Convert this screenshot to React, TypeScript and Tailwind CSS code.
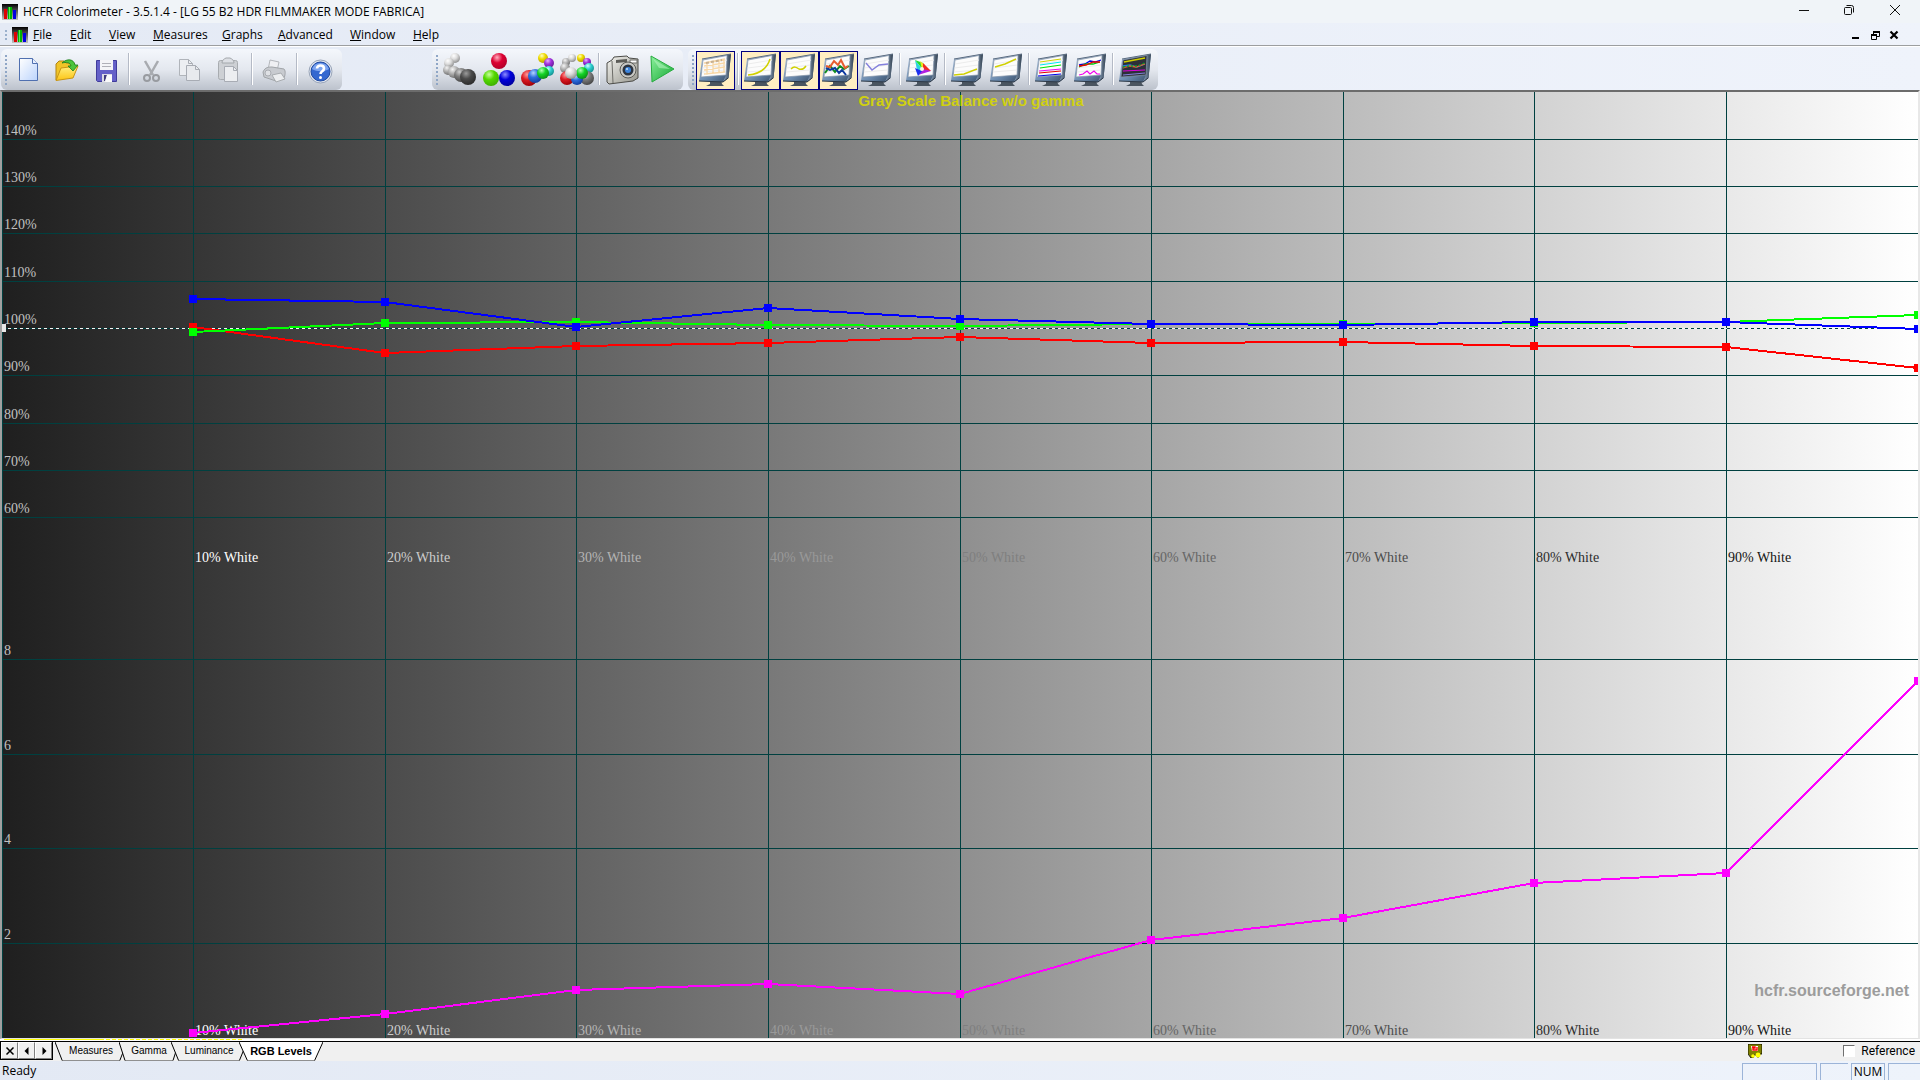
import React, { useLayoutEffect, useRef, useState } from "react";

/* ---------- shared drawing helpers ---------- */

const BALLS: Record<string, [string, string, string]> = {
  white: ["#ffffff", "#dcdcdc", "#8c8c8c"],
  silver: ["#f4f4f4", "#b4b4b4", "#6c6c6c"],
  gray: ["#d0d0d0", "#7c7c7c", "#444444"],
  dark: ["#9a9a9a", "#4a4a4a", "#2a2a2a"],
  red: ["#ff9c9c", "#dc1a22", "#9c0008"],
  crimson: ["#ffb0c0", "#dc0032", "#b00028"],
  lime: ["#c8ff9c", "#54d800", "#3cae00"],
  navy: ["#8c8cff", "#0000dc", "#00009c"],
  blue: ["#b4d4ff", "#2c6cdc", "#123c9c"],
  green: ["#b4ffb4", "#14d428", "#0a8c14"],
  cyan: ["#d4ffff", "#30d0d0", "#108c8c"],
  yellow: ["#ffffc0", "#f0dc00", "#b49c00"],
  purple: ["#e8b4ff", "#a030dc", "#641c94"],
};

function Defs() {
  return (
    <svg className="absolute size-0" aria-hidden="true">
      <defs>
        {Object.entries(BALLS).map(([name, c]) => (
          <radialGradient key={name} id={"ball-" + name} cx="0.38" cy="0.28" r="0.75">
            <stop offset="0" stopColor={c[0]} />
            <stop offset="0.45" stopColor={c[1]} />
            <stop offset="1" stopColor={c[2]} />
          </radialGradient>
        ))}
        <linearGradient id="bezel" x1="0" y1="0" x2="1" y2="1">
          <stop offset="0" stopColor="#b4c8e0" />
          <stop offset="0.55" stopColor="#6c8cb0" />
          <stop offset="1" stopColor="#344860" />
        </linearGradient>
        <linearGradient id="side" x1="0" y1="0" x2="1" y2="0">
          <stop offset="0" stopColor="#8ca4c0" />
          <stop offset="1" stopColor="#34414f" />
        </linearGradient>
        <linearGradient id="page" x1="0" y1="0" x2="1" y2="1">
          <stop offset="0" stopColor="#ffffff" />
          <stop offset="1" stopColor="#bcd4fc" />
        </linearGradient>
        <linearGradient id="folder" x1="0" y1="0" x2="0" y2="1">
          <stop offset="0" stopColor="#fff080" />
          <stop offset="1" stopColor="#fcc414" />
        </linearGradient>
        <linearGradient id="play" x1="0" y1="0" x2="1" y2="1">
          <stop offset="0" stopColor="#8cf09c" />
          <stop offset="1" stopColor="#14a834" />
        </linearGradient>
        <linearGradient id="body" x1="0" y1="0" x2="1" y2="1">
          <stop offset="0" stopColor="#f4f4f0" />
          <stop offset="1" stopColor="#94948c" />
        </linearGradient>
        <linearGradient id="barTop" x1="0" y1="0" x2="0" y2="1">
          <stop offset="0" stopColor="#000000" />
          <stop offset="1" stopColor="#c4c4c4" />
        </linearGradient>
      </defs>
    </svg>
  );
}

function Icon({ children }: { children: React.ReactNode }) {
  return (
    <svg viewBox="0 0 39 39" className="size-[39px] shrink-0" fill="none" aria-hidden="true">
      {children}
    </svg>
  );
}

function Balls({ items }: { items: [string, number, number, number][] }) {
  return (
    <Icon>
      {items.map(([c, x, y, r], i) => (
        <circle key={i} cx={x} cy={y} r={r} fill={`url(#ball-${c})`} />
      ))}
    </Icon>
  );
}

function Monitor({ dark, children }: { dark?: boolean; children?: React.ReactNode }) {
  return (
    <Icon>
      <path d="M14 29h11l1 4 2 2H10l4-2z" fill="#4a5560" />
      <path d="M6 8 35 3 32.500 27 27 31 3 30z" fill="url(#bezel)" />
      <path d="M31 4 35 3 32.500 27 27 31 30 24z" fill="url(#side)" />
      <path d="M3 30 27 31 32 27" stroke="#2c3846" />
      <path d="M6 8 35 3" stroke="#5c6c80" />
      <path d="M7 9 31 4.500 30 24 5 26z" fill={dark ? "#2c3038" : "#fcfcfc"} stroke="#8494a8" strokeWidth="0.7" />
      {!dark && <path d="M7 13 31 9M6.500 17 30 14M6 21 30 19" stroke="#ececec" />}
      {children}
    </Icon>
  );
}

function AppLogo() {
  return (
    <svg viewBox="0 0 16 16" className="size-4 shrink-0" aria-hidden="true">
      <rect width="16" height="16" fill="url(#barTop)" />
      <rect x="2" y="5" width="3" height="10" fill="#e00000" />
      <rect x="6" y="3" width="4" height="12" fill="#00b400" />
      <rect x="7" y="3" width="1" height="12" fill="#50f050" />
      <rect x="11" y="6" width="3" height="9" fill="#0000e0" />
    </svg>
  );
}

/* ---------- toolbars ---------- */

const NewIcon = (
  <Icon>
    <path d="M10.500 7.500h13l5 5v17h-18z" fill="url(#page)" stroke="#5070b0" />
    <path d="M23.500 7.500v5h5" fill="#e8f0ff" stroke="#5070b0" />
  </Icon>
);
const OpenIcon = (
  <Icon>
    <path d="M8 29V13l3-3h5l2 2h8l1 5z" fill="#f0c428" stroke="#b08414" />
    <path d="M8 29.500 13 17l17-2-5 12z" fill="url(#folder)" stroke="#c89414" />
    <path d="M14 12c5-5 12-4 13 2h3l-5 6-5-5h3c-1-4-5-4-9-3z" fill="#4cc43c" stroke="#1c7c1c" strokeWidth="0.8" />
  </Icon>
);
const SaveIcon = (
  <Icon>
    <path d="M9.500 9.500h20v21h-19l-1-1z" fill="#6460c8" stroke="#403c9c" />
    <path d="M13 9h13v10H13z" fill="#f4f4f8" />
    <path d="M15 12.500h9M15 15.500h9" stroke="#b0b0b8" />
    <path d="M15 23h10v8H15z" fill="#dcdce4" />
    <path d="M17 24h3l-2 6h-1z" fill="#403c7c" />
    <path d="M20 24h5v7h-7z" fill="#fafafa" />
  </Icon>
);
const CutIcon = (
  <Icon>
    <path d="m13 10 8 14M26 10l-8 14" stroke="#a8abb0" strokeWidth="2.5" />
    <circle cx="15" cy="27" r="3" stroke="#989ba0" strokeWidth="2" />
    <circle cx="24" cy="27" r="3" stroke="#989ba0" strokeWidth="2" />
  </Icon>
);
const CopyIcon = (
  <Icon>
    <path d="M8.500 8.500h9l4 4v12h-13z" fill="#eceef2" stroke="#b0b4ba" />
    <path d="M15.500 14.500h9l4 4v11h-13z" fill="#e8eaee" stroke="#a8acb4" />
    <path d="M24.500 14.500v4h4M17.500 8.500v4h4" stroke="#a8acb4" />
  </Icon>
);
const PasteIcon = (
  <Icon>
    <rect x="8.500" y="9.500" width="19" height="19" rx="2" fill="#cdd0d4" stroke="#a8acb0" />
    <path d="M12 12c0-3 2-4 4-5h4c2 1 4 2 4 5z" fill="#dcdfe4" stroke="#a4a8ac" />
    <path d="M14.500 15.500h9l4 4v11h-13z" fill="#eceef1" stroke="#a8acb4" />
    <path d="M23.500 15.500v4h4" stroke="#a8acb4" />
  </Icon>
);
const PrintIcon = (
  <Icon>
    <path d="M13 19 15 9l9 2-2 9z" fill="#eff0f3" stroke="#b4b7bc" />
    <path d="M8 21c2-5 6-5 9-5l12 2c2 2 1 7 0 9l-8 3-12-4z" fill="#c8cbd0" stroke="#a0a4a8" />
    <path d="m17 24 9-2 4 6-9 3z" fill="#eceef0" stroke="#a8acb0" />
    <circle cx="13" cy="22" r="3" fill="#dfe1e5" stroke="#aaadb2" />
  </Icon>
);
const HelpIcon = (
  <Icon>
    <circle cx="20.500" cy="20.500" r="11.500" fill="#e4e8f0" stroke="#98a4b8" />
    <circle cx="20.500" cy="20.500" r="9.500" fill="#3468d0" stroke="#1c48a0" />
    <path d="M12 18a9 9 0 0 1 17 0c-5 3-12 3-17 0z" fill="#7ca4f0" />
    <path d="M17 17.500c0-4 7-4 7 0 0 3-3.500 2.500-3.500 5.500" stroke="#fff" strokeWidth="2.6" />
    <circle cx="20.500" cy="26.500" r="1.500" fill="#fff" />
  </Icon>
);
const CameraIcon = (
  <Icon>
    <path d="m5 12 5-3 2-3 13-1 2 2 9 1v19l-5 3-24 3-2-2z" fill="url(#body)" stroke="#4c4c48" />
    <path d="m10 10 1 22" stroke="#6c6c68" />
    <path d="m14 9 11-1v3l-11 1z" fill="#5c5c58" />
    <path d="m28 9 7 0v3l-7 0z" fill="#fcfcfc" stroke="#6c6c68" />
    <circle cx="26" cy="19" r="8" fill="#c8c8c4" stroke="#5c5c58" />
    <circle cx="26" cy="19" r="5.500" fill="#2c3440" />
    <circle cx="26" cy="19" r="3" fill="#3c84dc" />
    <circle cx="25" cy="18" r="1" fill="#c4e4ff" />
  </Icon>
);
const PlayIcon = (
  <Icon>
    <path d="m10 5 23 13-22 13z" fill="url(#play)" stroke="#28ac40" strokeLinejoin="round" />
    <path d="m12 8 17 10-11-1z" fill="#b0f4bc" opacity="0.6" />
  </Icon>
);

type Tool = { label: string; icon: React.ReactNode; on?: boolean } | null;

const FILE_TOOLS: Tool[] = [
  { label: "New", icon: NewIcon },
  { label: "Open", icon: OpenIcon },
  { label: "Save", icon: SaveIcon },
  null,
  { label: "Cut", icon: CutIcon },
  { label: "Copy", icon: CopyIcon },
  { label: "Paste", icon: PasteIcon },
  null,
  { label: "Print", icon: PrintIcon },
  null,
  { label: "Help", icon: HelpIcon },
];

const MEASURE_TOOLS: Tool[] = [
  {
    label: "Measure gray scale",
    icon: (
      <Balls items={[["white", 15, 7, 5], ["white", 9, 12, 5], ["silver", 8, 19, 5], ["silver", 14, 21, 6], ["gray", 21, 24, 7], ["dark", 28, 26, 8]]} />
    ),
  },
  {
    label: "Measure primaries",
    icon: <Balls items={[["crimson", 20, 10, 8], ["lime", 12, 27, 8], ["navy", 28, 27, 8]]} />,
  },
  {
    label: "Measure secondaries",
    icon: (
      <Balls items={[["yellow", 25, 7, 5], ["purple", 31, 12, 5], ["cyan", 31, 20, 5], ["red", 11, 27, 8], ["blue", 17, 25, 7], ["green", 25, 22, 6]]} />
    ),
  },
  {
    label: "Measure all colors",
    icon: (
      <Balls
        items={[["silver", 9, 11, 4], ["white", 15, 7, 4], ["yellow", 24, 7, 4], ["purple", 30, 11, 4], ["cyan", 32, 17, 5], ["silver", 8, 17, 5], ["gray", 30, 27, 7], ["red", 10, 27, 7], ["blue", 20, 28, 6], ["green", 25, 22, 6], ["white", 14, 22, 6]]}
      />
    ),
  },
  null,
  { label: "Capture", icon: CameraIcon },
  { label: "Run", icon: PlayIcon },
];

const VIEW_TOOLS: Tool[] = [
  {
    label: "Measures table",
    on: true,
    icon: (
      <Monitor>
        <path d="M8 12 29 8M8 15 29 12M8 19 29 16M8 23 29 21M11 12v12M17 10v13M23 9v13M28 8v13" stroke="#f8d8a8" strokeWidth="1.300" />
        <path d="m10 12 16-3" stroke="#c8b090" strokeWidth="2" strokeDasharray="3 2" />
      </Monitor>
    ),
  },
  null,
  {
    label: "Luminance",
    on: true,
    icon: (
      <Monitor>
        <path d="M7 24c12-1 19-6 22-16" stroke="#d0d000" strokeWidth="1.500" />
      </Monitor>
    ),
  },
  {
    label: "Gamma",
    on: true,
    icon: (
      <Monitor>
        <path d="M11 18c3-3 5-2 8 0 3 1 5 0 7-3" stroke="#d0d000" strokeWidth="1.500" />
      </Monitor>
    ),
  },
  {
    label: "RGB levels",
    on: true,
    icon: (
      <Monitor>
        <path d="m6 22 5-7 5 6 5-6 4 3 5-3" stroke="#108c20" strokeWidth="2" />
        <path d="m7 17 4 2 5-2 4 5 3-3 4 5" stroke="#0c38a0" strokeWidth="2" />
        <path d="m7 15 4 1 4-6 4 4 3-5 4 8 3-2" stroke="#e85c30" strokeWidth="2" />
      </Monitor>
    ),
  },
  {
    label: "Color temperature",
    icon: (
      <Monitor>
        <path d="m8 12 6 7 7-5 9-1" stroke="#8480dc" strokeWidth="1.400" />
      </Monitor>
    ),
  },
  null,
  {
    label: "CIE diagram",
    icon: (
      <Monitor>
        <path d="m12 9 3 15 5-5z" fill="#2cd4e0" />
        <path d="m12 9 8 3 1 8z" fill="#20e030" />
        <path d="m17 10 5 4 1 6-4-2z" fill="#f0e020" />
        <path d="m20 12 8 8-8 0z" fill="#f02820" />
        <path d="m15 24 13-4-8-2z" fill="#b020e0" />
        <path d="m12 17 3 8 4-5z" fill="#1c30f0" />
        <circle cx="19" cy="18" r="2" fill="#fff4e0" />
      </Monitor>
    ),
  },
  null,
  {
    label: "Near black",
    icon: (
      <Monitor>
        <path d="m6 24 10-1 13-5" stroke="#d0d000" strokeWidth="1.500" />
      </Monitor>
    ),
  },
  {
    label: "Near white",
    icon: (
      <Monitor>
        <path d="m8 16 10-3 11-5" stroke="#d0d000" strokeWidth="1.500" />
      </Monitor>
    ),
  },
  null,
  {
    label: "Saturation luminance",
    icon: (
      <Monitor>
        <path d="m8 11 21-3" stroke="#d0d000" />
        <path d="m8 14 21-3" stroke="#00e8f0" />
        <path d="m8 17 21-3" stroke="#00e800" />
        <path d="m7 20 22-2" stroke="#f000f0" />
        <path d="m7 22 22-2" stroke="#e80000" />
        <path d="m6 25 23-2" stroke="#0000e8" />
      </Monitor>
    ),
  },
  {
    label: "Saturation shifts",
    icon: (
      <Monitor>
        <path d="m8 14 6-1 5-3 5 1 6-2" stroke="#0000e0" strokeWidth="1.300" />
        <path d="m8 16 7-3 7 0 7-2" stroke="#00c800" strokeWidth="1.300" />
        <path d="m8 15 7-1 7-3 7 0" stroke="#e80000" strokeWidth="1.300" />
        <path d="m8 24 4-1 4-3 3 3 4-3 3 3h3" stroke="#f000f0" strokeWidth="1.200" />
      </Monitor>
    ),
  },
  null,
  {
    label: "Combined free measures",
    icon: (
      <Monitor dark>
        <path d="m8 11 21-4" stroke="#d0d000" strokeWidth="1.300" />
        <path d="m7 15 7-1 7 2 8-3" stroke="#2080e0" strokeWidth="1.300" />
        <path d="m7 17 7-2 6 1 9-3" stroke="#e85c30" strokeWidth="1.300" />
        <path d="m7 16 6-1 8 0 8-3" stroke="#10a020" strokeDasharray="2 2" strokeWidth="1.300" />
        <path d="m7 20 22-1" stroke="#e000e0" strokeWidth="1.200" />
        <path d="m7 24 22-2" stroke="#8480dc" strokeWidth="1.200" />
      </Monitor>
    ),
  },
];

function Grip() {
  return <span className="mt-1 h-[31px] w-[2px] shrink-0 bg-[repeating-linear-gradient(to_bottom,#8fa6c6_0_2px,transparent_2px_4px)]" />;
}

function ToolBand({ name, tools }: { name: string; tools: Tool[] }) {
  return (
    <div
      role="toolbar"
      aria-label={name}
      className="flex h-[41px] items-start rounded-md bg-linear-to-b from-[#f4f7fc] via-[#e4e8ef] to-[#bcc2cc] pt-[2px] pr-[3px] pl-1"
    >
      <Grip />
      <div className="ml-[2px] flex">
        {tools.map((t, i) =>
          t ? (
            <button
              key={i}
              type="button"
              aria-label={t.label}
              className={
                t.on
                  ? "flex size-[39px] items-center justify-center border border-[#000080] bg-[#ffeec2]"
                  : "flex size-[39px] items-center justify-center"
              }
            >
              {t.icon}
            </button>
          ) : (
            <span key={i} className="mx-[2px] mt-[2px] h-8 w-[2px] border-r border-l border-r-white border-l-[#b4bac6]" />
          ),
        )}
      </div>
    </div>
  );
}

/* ---------- chart ---------- */

const WHITES = [
  { label: "10% White", color: "#ffffff" },
  { label: "20% White", color: "#cccccc" },
  { label: "30% White", color: "#b4b4b4" },
  { label: "40% White", color: "#999999" },
  { label: "50% White", color: "#7f7f7f" },
  { label: "60% White", color: "#666666" },
  { label: "70% White", color: "#4c4c4c" },
  { label: "80% White", color: "#2c2c2c" },
  { label: "90% White", color: "#141414" },
];

// Percent levels for stimulus 10% .. 100%.
const RED = [100.3, 94.8, 96.2, 96.8, 98.2, 96.9, 97.1, 96.1, 96.0, 91.6];
const GREEN = [99.2, 101.1, 101.2, 100.7, 100.5, 100.9, 100.9, 101.0, 101.2, 102.8];
const BLUE = [106.1, 105.5, 100.3, 104.2, 101.9, 100.9, 100.7, 101.3, 101.3, 99.8];
// Delta E for the same stimuli.
const DELTA_E = [0.09, 0.49, 1.01, 1.14, 0.92, 2.07, 2.52, 3.26, 3.47, 7.53];

function Chart() {
  const ref = useRef<HTMLDivElement>(null);
  const [{ w, h }, setSize] = useState({ w: 0, h: 0 });
  useLayoutEffect(() => {
    const el = ref.current!;
    const measure = () => setSize({ w: el.clientWidth, h: el.clientHeight });
    measure();
    const ro = new ResizeObserver(measure);
    ro.observe(el);
    return () => ro.disconnect();
  }, []);

  const x = (i: number) => Math.floor((w * i) / 10);
  const yPct = (v: number) => Math.floor(((150 - v) / 200) * h);
  const yDe = (v: number) => Math.floor(h - (v / 20) * h);

  const series = (vals: number[], y: (v: number) => number, color: string) => (
    <g key={color}>
      <polyline
        points={vals.map((v, i) => `${x(i + 1)},${y(v)}`).join(" ")}
        fill="none"
        stroke={color}
        strokeWidth="2"
        shapeRendering="crispEdges"
      />
      {vals.map((v, i) => (
        <rect key={i} x={x(i + 1) - 4} y={y(v) - 4} width="8" height="8" fill={color} />
      ))}
    </g>
  );

  return (
    <div ref={ref} className="relative min-h-0 min-w-0 flex-1 overflow-hidden bg-linear-to-r/srgb from-[#1f1f1f] to-white">
      <svg width={w} height={h} className="absolute inset-0" role="img" aria-label="Gray scale balance chart">
        <g stroke="#004040" shapeRendering="crispEdges">
          {[0, 1, 2, 3, 4, 5, 6, 7, 8, 9].map((i) => (
            <line key={i} x1={x(i) + 0.5} x2={x(i) + 0.5} y1="0" y2={h} />
          ))}
          {[140, 130, 120, 110, 100, 90, 80, 70, 60].map((v) => (
            <line key={v} x1="0" x2={w} y1={yPct(v) + 0.5} y2={yPct(v) + 0.5} />
          ))}
          {[8, 6, 4, 2].map((v) => (
            <line key={v} x1="0" x2={w} y1={yDe(v) + 0.5} y2={yDe(v) + 0.5} />
          ))}
        </g>
        <line
          x1="0"
          x2={w}
          y1={yPct(100) + 0.5}
          y2={yPct(100) + 0.5}
          stroke="#f4f4f4"
          strokeDasharray="3 3"
          shapeRendering="crispEdges"
        />
        <rect x="0" y={yPct(100) - 4} width="4" height="8" fill="#e8e8e8" />
        <g fontFamily="'Liberation Serif', serif" fontSize="14" fill="#c0c0c0">
          {[140, 130, 120, 110, 100, 90, 80, 70, 60].map((v) => (
            <text key={v} x="2" y={yPct(v) - 4}>
              {v}%
            </text>
          ))}
          {[8, 6, 4, 2].map((v) => (
            <text key={v} x="2" y={yDe(v) - 4}>
              {v}
            </text>
          ))}
          {WHITES.map((t, i) => (
            <g key={t.label} fill={t.color}>
              <text x={x(i + 1) + 2} y={yPct(50) - 3}>
                {t.label}
              </text>
              <text x={x(i + 1) + 2} y={h - 3}>
                {t.label}
              </text>
            </g>
          ))}
        </g>
        <g fontFamily="'Liberation Sans', sans-serif" fontWeight="bold">
          <text x={w / 2 + 11} y="14" fontSize="15" textAnchor="middle" fill="#d0d010">
            Gray Scale Balance w/o gamma
          </text>
          <text x={w - 9} y={h - 42} fontSize="16" textAnchor="end" fill="#9c9c9c">
            hcfr.sourceforge.net
          </text>
        </g>
        {series(RED, yPct, "#ff0000")}
        {series(GREEN, yPct, "#00ff00")}
        {series(BLUE, yPct, "#0000ff")}
        {series(DELTA_E, yDe, "#ff00ff")}
      </svg>
    </div>
  );
}

/* ---------- window chrome ---------- */

const MENUS = [
  { label: "File", w: "w-[37px]" },
  { label: "Edit", w: "w-[39px]" },
  { label: "View", w: "w-11" },
  { label: "Measures", w: "w-[69px]" },
  { label: "Graphs", w: "w-14" },
  { label: "Advanced", w: "w-[72px]" },
  { label: "Window", w: "w-[63px]" },
  { label: "Help", w: "w-10" },
];

const TABS = [
  { label: "Measures", w: "w-[72px]" },
  { label: "Gamma", w: "w-[60px]" },
  { label: "Luminance", w: "w-[76px]" },
  { label: "RGB Levels", w: "w-[84px]", active: true },
];

function TitleBar() {
  return (
    <header className="flex h-[23px] shrink-0 items-center bg-[#f0f4f8] pl-[2px]">
      <AppLogo />
      <h1 className="ml-[5px] flex-1 text-[12px] whitespace-nowrap">HCFR Colorimeter - 3.5.1.4 - [LG 55 B2 HDR FILMMAKER MODE FABRICA]</h1>
      <div className="flex h-full items-start pr-px">
        <button type="button" aria-label="Minimize" className="flex h-5 w-[45px] items-center justify-center">
          <svg viewBox="0 0 12 12" className="size-3" stroke="#111" fill="none"><path d="M1 6.500h10" /></svg>
        </button>
        <button type="button" aria-label="Restore" className="flex h-5 w-[45px] items-center justify-center">
          <svg viewBox="0 0 12 12" className="size-3" stroke="#111" fill="none">
            <rect x="1.500" y="3.500" width="7" height="7" rx="1" />
            <path d="M3.500 1.500h5a2 2 0 0 1 2 2v5" />
          </svg>
        </button>
        <button type="button" aria-label="Close" className="flex h-5 w-12 items-center justify-center">
          <svg viewBox="0 0 12 12" className="size-3" stroke="#111" fill="none"><path d="m1 1 10 10M11 1 1 11" /></svg>
        </button>
      </div>
    </header>
  );
}

function MenuBar() {
  return (
    <nav aria-label="Menu" className="flex h-[23px] shrink-0 items-center border-b border-[#9c9ea0] pt-[2px] pl-[5px]">
      <span className="h-[11px] w-[2px] bg-[repeating-linear-gradient(to_bottom,#9ab0cc_0_2px,transparent_2px_4px)]" />
      <span className="mr-[5px] ml-[5px]"><AppLogo /></span>
      {MENUS.map((m) => (
        <button key={m.label} type="button" className={`${m.w} shrink-0 text-left text-[12px] leading-4`}>
          <span className="underline">{m.label[0]}</span>
          {m.label.slice(1)}
        </button>
      ))}
      <div className="ml-auto flex pr-[17px]">
        <button type="button" aria-label="Minimize document" className="flex w-[19px] justify-center">
          <svg viewBox="0 0 10 10" className="size-[10px]"><path d="M1 7h7v2H1z" /></svg>
        </button>
        <button type="button" aria-label="Restore document" className="flex w-[19px] justify-center">
          <svg viewBox="0 0 10 10" className="size-[10px]" fill="none" stroke="#000">
            <path d="M3 1h7v2H3zM1 4h6v2H1z" fill="#000" stroke="none" />
            <path d="M1.500 5.500h5v4h-5zM3.500 4V2.500h6v4H7" />
          </svg>
        </button>
        <button type="button" aria-label="Close document" className="flex w-[19px] justify-center">
          <svg viewBox="0 0 10 10" className="size-[10px]" stroke="#000" strokeWidth="2.200"><path d="m1.500 1.500 7 7M8.500 1.500l-7 7" /></svg>
        </button>
      </div>
    </nav>
  );
}

function SheetBar() {
  const arrows = [
    { label: "Close sheet", d: "m1.500 1.500 7 7M8.500 1.500l-7 7", line: true },
    { label: "Previous sheet", d: "M6.500 1v8l-4-4z" },
    { label: "Next sheet", d: "M3.500 1v8l4-4z" },
  ];
  return (
    <div className="flex h-5 shrink-0 items-start border-t border-black bg-[#f0f0f0] font-['Liberation_Sans',sans-serif]">
      <div className="flex h-[18px] border-r border-b border-l border-black">
        {arrows.map((a) => (
          <button
            key={a.label}
            type="button"
            aria-label={a.label}
            className="flex w-[17px] items-center justify-center border-t border-r border-b border-l border-t-white border-r-[#808080] border-b-[#808080] border-l-white"
          >
            <svg viewBox="0 0 10 10" className="size-[10px]" stroke={a.line ? "#000" : "none"} strokeWidth="1.500"><path d={a.d} /></svg>
          </button>
        ))}
      </div>
      <div role="tablist" className="ml-[2px] flex">
        {TABS.map((t, i) => (
          <button
            key={t.label}
            type="button"
            role="tab"
            aria-selected={!!t.active}
            className={`${t.w} ${i ? "-ml-2" : ""} relative flex h-[19px] shrink-0 items-start justify-center`}
          >
            <svg viewBox="0 0 100 19" preserveAspectRatio="none" className="absolute inset-0 size-full" aria-hidden="true">
              <path d="M0 0 10 18.500H90L100 0z" fill={t.active ? "#fff" : "#f0f0f0"} />
              <path d="M10 18.500H90" stroke="#909090" vectorEffect="non-scaling-stroke" />
              <path d="M0 0 10 18.500M90 18.500 100 0" stroke="#000" vectorEffect="non-scaling-stroke" />
            </svg>
            <span className={t.active ? "relative text-[11px] leading-[18px] font-bold" : "relative text-[10px] leading-[18px]"}>{t.label}</span>
          </button>
        ))}
      </div>
      <div className="ml-auto flex h-[18px] items-center pr-[5px]">
        <svg viewBox="0 0 14 14" className="mr-[81px] size-[14px]" aria-hidden="true">
          <path d="M0 0h14v10h-2l-1 3H9l-1-2H6l-1 3H3L0 10z" fill="#808000" stroke="#000" strokeWidth="0.800" />
          <path d="M3 2h7v5H4z" fill="#fff" />
          <path d="M4 3h3v1H5v2h4V3" stroke="#f00" strokeWidth="1.400" fill="none" />
          <circle cx="5" cy="12" r="1.800" fill="#ff0" />
          <circle cx="10" cy="11" r="2.500" fill="#ff0" />
        </svg>
        <label className="flex items-center text-[12px]">
          <input
            type="checkbox"
            className="mr-1.5 size-3 appearance-none border-t border-r border-b border-l border-t-[#707070] border-r-white border-b-white border-l-[#707070] bg-white"
          />
          <span className="font-[Roboto,sans-serif]">Reference</span>
        </label>
      </div>
    </div>
  );
}

function StatusBar() {
  return (
    <footer className="flex h-[19px] shrink-0 items-center bg-linear-to-r from-[#e3e9f4] to-[#eef3fb] text-[12px]">
      <span className="flex-1 pt-px pl-[2px] leading-4">Ready</span>
      <div className="flex h-full items-end gap-[3px] pt-[2px]">
        <span className="h-full w-[75px] border-t border-r border-l border-[#9cb4d8]" />
        <span className="h-full w-7 border-t border-l border-[#9cb4d8]" />
        <span className="h-full w-[34px] border-t border-r border-l border-[#9cb4d8] text-center leading-4">NUM</span>
        <span className="h-full w-8 border-t border-l border-[#9cb4d8]" />
      </div>
    </footer>
  );
}

export default function App() {
  return (
    <div className="flex h-screen flex-col overflow-hidden bg-linear-to-r from-[#e4eaf5] to-[#eff3fb] font-['Open_Sans','Noto_Sans',sans-serif] text-black">
      <Defs />
      <TitleBar />
      <MenuBar />
      <div className="flex h-11 shrink-0 items-end border-t border-white">
        <div className="ml-px"><ToolBand name="Standard" tools={FILE_TOOLS} /></div>
        <div className="ml-[90px]"><ToolBand name="Measures" tools={MEASURE_TOOLS} /></div>
        <div className="ml-[5px]"><ToolBand name="Views" tools={VIEW_TOOLS} /></div>
      </div>
      <main className="flex min-h-0 flex-1 border-t-2 border-r-2 border-b border-l-2 border-t-[#6c6c6c] border-r-[#e8e8e8] border-b-[#e3e3e3] border-l-[#a0a0a0]">
        <Chart />
      </main>
      <div className="flex h-[2px] shrink-0 bg-white">
        <span className="ml-1 h-px w-24 bg-[#ffff00]" />
        <span className="h-px w-[142px] bg-[repeating-linear-gradient(to_right,#ffff00_0_4px,#fff_4px_6px)]" />
      </div>
      <SheetBar />
      <StatusBar />
    </div>
  );
}
